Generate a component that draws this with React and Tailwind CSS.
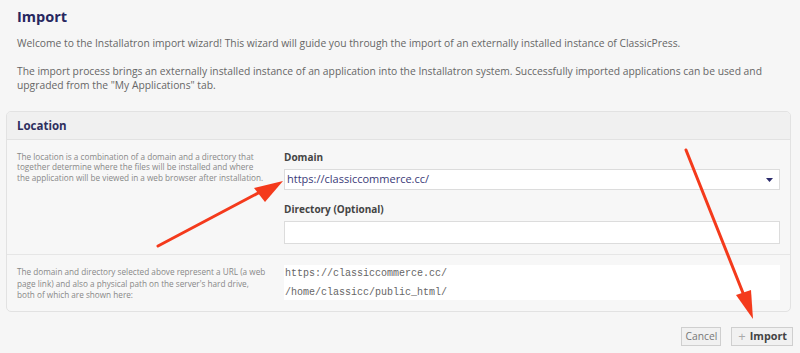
import React from "react";

export default function App() {
  return (
    <div
      className="relative w-[800px] h-[353px] overflow-hidden bg-[#f6f6f6]"
      style={{ fontFamily: '"Open Sans", "Noto Sans", sans-serif' }}
    >
      <div className="px-[17px]">
        <h1 className="pt-[7px] text-[14.5px] leading-[20px] font-bold text-[#27275f]">Import</h1>
        <p className="mt-[9px] text-[10.3px] leading-[14px] text-[#666]">
          Welcome to the Installatron import wizard! This wizard will guide you through the import of an externally installed instance of ClassicPress.
        </p>
        <p className="mt-[14px] text-[10.3px] leading-[14px] text-[#666]">
          The import process brings an externally installed instance of an application into the Installatron system. Successfully imported applications can be used and upgraded from the "My Applications" tab.
        </p>
      </div>

      <div className="mt-[19px] ml-[6px] mr-[9px] rounded-[5px] border border-[#e2e2e2] bg-[#f7f7f7] overflow-hidden">
        <div className="h-[28px] flex items-center px-[10px] bg-[#f0f0f0] border-b border-[#e2e2e2]">
          <span className="text-[11.5px] font-bold text-[#2e2e5e]">Location</span>
        </div>

        <div className="flex px-[10px] pt-[12px] pb-[10px] border-b border-[#e6e6e6]">
          <div className="w-[267px] text-[8.2px] leading-[10.3px] text-[#888]">
            The location is a combination of a domain and a directory that<br />
            together determine where the files will be installed and where<br />
            the application will be viewed in a web browser after installation.
          </div>
          <div className="flex-1">
            <div className="text-[10px] leading-[14px] font-bold text-[#444] mt-[-2px]">Domain</div>
            <div className="mt-[5px] h-[21px] flex items-center justify-between bg-white border border-[#dcdcdc] pl-[2px] pr-[6px]">
              <span className="text-[11px] text-[#3a3a78]">https://classiccommerce.cc/</span>
              <svg width="7" height="4" viewBox="0 0 7 4"><path d="M0 0H7L3.5 4Z" fill="#2b2b6b" /></svg>
            </div>
            <div className="mt-[12px] text-[10px] leading-[14px] font-bold text-[#444]">Directory (Optional)</div>
            <div className="mt-[5px] h-[23px] bg-white border border-[#dcdcdc]"></div>
          </div>
        </div>

        <div className="flex px-[10px] pt-[10px] pb-[10px]">
          <div className="w-[267px] pt-[1px] text-[8.2px] leading-[11.5px] text-[#888]">
            The domain and directory selected above represent a URL (a web<br />
            page link) and also a physical path on the server's hard drive,<br />
            both of which are shown here:
          </div>
          <div className="flex-1 h-[35px] bg-white flex flex-col justify-center gap-[8px] pl-[1px] text-[10px] leading-[11px] text-[#666]"
            style={{ fontFamily: '"Liberation Mono", monospace' }}>
            <div>https://classiccommerce.cc/</div>
            <div>/home/classicc/public_html/</div>
          </div>
        </div>
      </div>

      <div className="flex justify-end gap-[10px] mt-[15px] mr-[7px]">
        <button className="h-[19px] px-[3px] border border-[#cfcfcf] bg-[#f1f1f1] text-[10.3px] text-[#777] leading-none">Cancel</button>
        <button className="h-[19px] pl-[6px] pr-[5px] border border-[#cfcfcf] bg-[#f1f1f1] text-[10.8px] font-bold text-[#444] leading-none flex items-center gap-[4px]">
          <span className="text-[#aaa] font-normal text-[13px]">+</span>Import
        </button>
      </div>

      <svg className="absolute inset-0 pointer-events-none" width="800" height="353" viewBox="0 0 800 353">
        <line x1="158" y1="246" x2="262" y2="191" stroke="#f43a1c" strokeWidth="3" strokeLinecap="round" />
        <path d="M283 181 L254 188 L265 202 Z" fill="#f43a1c" />
        <line x1="686" y1="150" x2="745" y2="298" stroke="#f43a1c" strokeWidth="3" strokeLinecap="round" />
        <path d="M753 319 L736 295 L751 290 Z" fill="#f43a1c" />
      </svg>
    </div>
  );
}
